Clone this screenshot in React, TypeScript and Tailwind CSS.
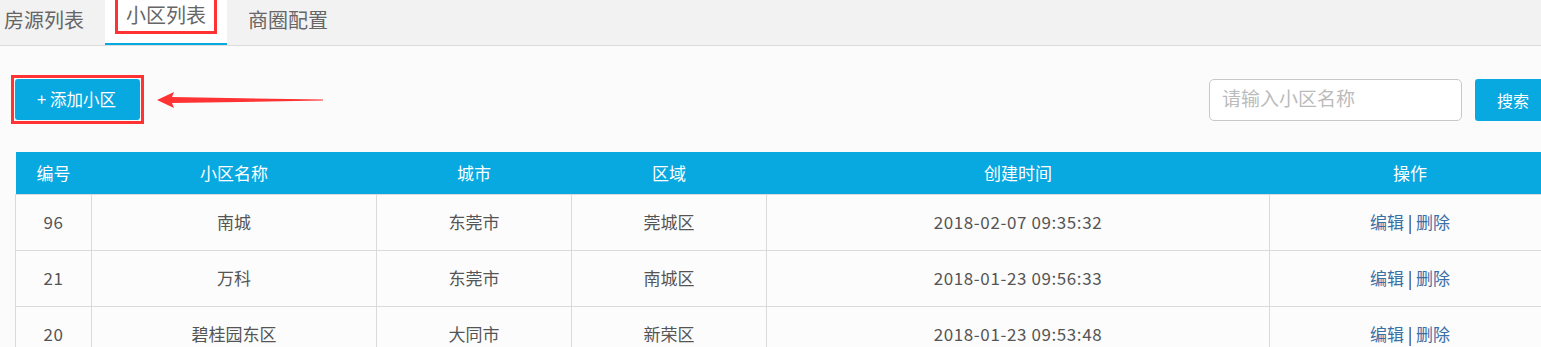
const rows = [
  { id: 96, name: '南城', city: '东莞市', area: '莞城区', time: '2018-02-07 09:35:32' },
  { id: 21, name: '万科', city: '东莞市', area: '南城区', time: '2018-01-23 09:56:33' },
  { id: 20, name: '碧桂园东区', city: '大同市', area: '新荣区', time: '2018-01-23 09:53:48' },
];

const font = { fontFamily: '"Noto Sans CJK SC", "Noto Sans", sans-serif' };

export default function App() {
  return (
    <div className="h-[347px] w-[1541px] overflow-hidden bg-[#fbfbfb] text-[#555]" style={font}>
      <div className="w-[1560px]">
        {/* tabs */}
        <div className="flex h-[46px] border-b border-[#dcdcdc] bg-[#f2f2f2] text-[20px] text-[#666]">
          <div className="flex w-[105px] items-center pl-[4px] pb-[6px]">房源列表</div>
          <div className="flex w-[122px] items-start justify-center border-b-2 border-[#08a8e0] bg-white">
            <span className="flex h-[34px] w-[102px] items-center justify-center border-[3px] border-t-0 border-[#f33] pb-[2px]">
              小区列表
            </span>
          </div>
          <div className="flex items-center pl-[21px] pb-[6px]">商圈配置</div>
        </div>

        {/* toolbar */}
        <div className="flex w-[1551px] items-center pl-[11px] pt-[29px]">
          <div className="border-[3px] border-[#f33] p-px">
            <button className="h-[41px] w-[125px] rounded-[3px] bg-[#08a8e0] pr-[2px] text-[16.5px] text-white">
              + 添加小区
            </button>
          </div>
          <svg width="170" height="20" viewBox="0 0 170 20" className="ml-[12px]">
            <path d="M1 10 L18 2 L16 7 L167 9.6 L167 10.6 L16 13 L18 18 Z" fill="#f33" />
          </svg>
          <div className="ml-auto flex items-center">
            <div className="flex h-[42px] w-[253px] items-center rounded-[5px] border border-[#c8c8c8] bg-white pl-[12px] pb-[2px] text-[19px] text-[#bbb]">
              请输入小区名称
            </div>
            <button className="ml-[13px] h-[42px] w-[76px] rounded-l-[3px] bg-[#08a8e0] text-[16px] text-white">
              搜索
            </button>
          </div>
        </div>

        {/* table */}
        <div className="pl-[15px] pt-[28px]">
          <table className="w-[1536px] border-collapse text-center text-[17px]">
            <thead>
              <tr className="h-[42px] bg-[#08a8e0] text-white">
                <th className="w-[76px] font-normal">编号</th>
                <th className="w-[285px] font-normal">小区名称</th>
                <th className="w-[195px] font-normal">城市</th>
                <th className="w-[195px] font-normal">区域</th>
                <th className="w-[503px] font-normal">创建时间</th>
                <th className="font-normal">操作</th>
              </tr>
            </thead>
            <tbody>
              {rows.map((r) => (
                <tr key={r.id} className="h-[56px] bg-[#fcfcfc]">
                  <td className="border border-[#dadada] tracking-[0.5px]">{r.id}</td>
                  <td className="border border-[#dadada]">{r.name}</td>
                  <td className="border border-[#dadada]">{r.city}</td>
                  <td className="border border-[#dadada]">{r.area}</td>
                  <td className="border border-[#dadada] tracking-[0.6px]">{r.time}</td>
                  <td className="border border-[#dadada] text-[#3a6ea5]">
                    编辑 <span className="text-[#333]">|</span> 删除
                  </td>
                </tr>
              ))}
            </tbody>
          </table>
        </div>
      </div>
    </div>
  );
}
